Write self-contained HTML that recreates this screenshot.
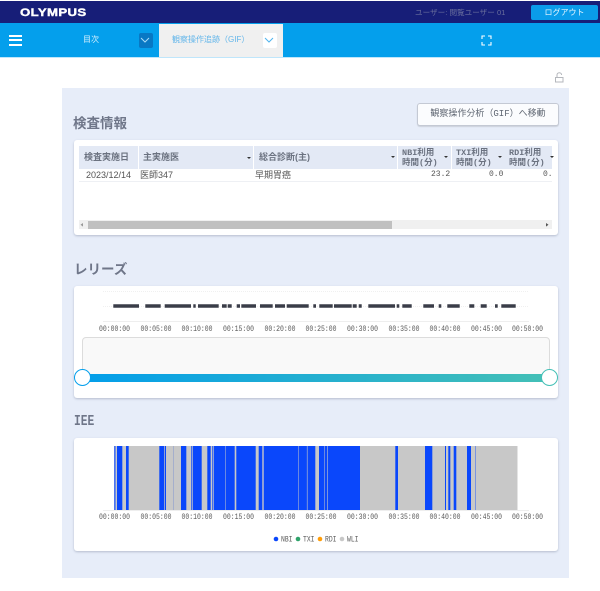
<!DOCTYPE html>
<html lang="ja"><head><meta charset="utf-8"><title>OLYMPUS</title>
<style>
*{box-sizing:border-box}
html,body{margin:0;padding:0;width:600px;height:591px;overflow:hidden;background:#fff;font-family:"Liberation Sans","Noto Sans CJK JP",sans-serif}
#w{position:absolute;left:0;top:0;width:600px;height:591px;filter:blur(.3px)}
.a{position:absolute;white-space:nowrap}
.card{position:absolute;background:#fff;border-radius:3px;box-shadow:0 1px 2px rgba(90,100,130,.35)}
.h{position:absolute;font-size:13.5px;font-weight:700;color:#6f7689;line-height:16px;white-space:nowrap}
.th{position:absolute;top:146px;height:23px;background:#e3e9f5;color:#6b7280;font-size:9px;font-weight:700;line-height:10px;white-space:nowrap}
.tri{position:absolute;width:0;height:0;border-left:2px solid transparent;border-right:2px solid transparent;border-top:2px solid #333}
.td{position:absolute;top:170px;font-size:9px;color:#555;line-height:10px;white-space:nowrap}
.mono{font-family:"Liberation Mono","Noto Sans CJK JP",monospace}
svg{position:absolute;left:0;top:0}
</style></head><body><div id="w">
<div class="a" style="left:0;top:1px;width:600px;height:22px;background:#171e78"></div>
<div class="a" style="left:20px;top:7px;font-size:11px;font-weight:700;color:#fff;letter-spacing:.3px;line-height:12px;transform:scaleX(1.2);transform-origin:left;-webkit-text-stroke:.4px #fff">OLYMPUS</div>
<div class="a" style="left:415px;top:7px;font-size:7.6px;color:#6a6f9c;line-height:11px">ユーザー: 閲覧ユーザー 01</div>
<div class="a" style="left:531px;top:5px;width:67px;height:15px;background:#0a9cea;border-radius:2px;color:#e8f6ff;font-size:8px;line-height:15px;text-align:center">ログアウト</div>
<div class="a" style="left:0;top:23px;width:600px;height:34px;background:#049fec"></div>
<div class="a" style="left:0;top:57px;width:600px;height:1px;background:#bfe6fb"></div>
<div class="a" style="left:9px;top:35px;width:13px;height:2px;background:#fff"></div>
<div class="a" style="left:9px;top:39px;width:13px;height:2px;background:#fff"></div>
<div class="a" style="left:9px;top:44px;width:13px;height:2px;background:#fff"></div>
<div class="a" style="left:83px;top:34px;font-size:8px;color:#d8f0fd;line-height:12px">目次</div>
<div class="a" style="left:139px;top:33px;width:14px;height:15px;background:#0878c4;border-radius:2px"></div>
<div class="a" style="left:159px;top:24px;width:124px;height:33px;background:#f0f0f0"></div>
<div class="a" style="left:172px;top:34px;font-size:8px;color:#63b6ea;line-height:12px">観察操作追跡（GIF）</div>
<div class="a" style="left:263px;top:33px;width:14px;height:15px;background:#fff;border-radius:2px"></div>

<div class="a" style="left:62px;top:88px;width:507px;height:490px;background:#e7edf9"></div>
<div class="h" style="left:73px;top:116px">検査情報</div>
<div class="h" style="left:74px;top:262px">レリーズ</div>
<div class="a mono" style="left:74px;top:414px;font-size:15px;font-weight:700;color:#6f7689;line-height:16px;transform:scaleX(.75);transform-origin:left">IEE</div>

<div class="a mono" style="left:417px;top:103px;width:142px;height:23px;background:#fbfcfe;border:1px solid #c4c9d4;border-radius:3px;box-shadow:0 1px 1px rgba(0,0,0,.12);font-size:9px;line-height:21px;text-align:center;color:#5f6672">観察操作分析（GIF）へ移動</div>

<div class="card" style="left:74px;top:140px;width:484px;height:95px"></div>
<div class="th" style="left:79px;width:59px;padding:6px 0 0 5px">検査実施日</div>
<div class="th" style="left:139px;width:114px;padding:6px 0 0 4px">主実施医</div>
<div class="th" style="left:254px;width:143px;padding:6px 0 0 5px">総合診断(主)</div>
<div class="th mono" style="left:398px;width:53px;padding:2px 0 0 4px;font-size:8.5px">NBI利用<br>時間(分)</div>
<div class="th mono" style="left:452px;width:53px;padding:2px 0 0 4px;font-size:8.5px">TXI利用<br>時間(分)</div>
<div class="th mono" style="left:505px;width:47px;padding:2px 0 0 4px;font-size:8.5px;overflow:hidden">RDI利用<br>時間(分)</div>
<div class="tri" style="left:247px;top:157px"></div>
<div class="tri" style="left:391px;top:156px"></div>
<div class="tri" style="left:444px;top:156px"></div>
<div class="tri" style="left:498px;top:156px"></div>
<div class="tri" style="left:550px;top:156px"></div>
<div class="a" style="left:79px;top:181px;width:473px;height:1px;background:#eef0f4"></div>
<div class="td" style="left:86px">2023/12/14</div>
<div class="td" style="left:140px">医師347</div>
<div class="td" style="left:255px">早期胃癌</div>
<div class="td mono" style="left:431px;font-size:8px">23.2</div>
<div class="td mono" style="left:489px;font-size:8px">0.0</div>
<div class="td mono" style="left:543px;width:9px;overflow:hidden;font-size:8px">0.0</div>
<div class="a" style="left:79px;top:220px;width:473px;height:9px;background:#f0f0f0"></div>
<div class="a" style="left:88px;top:221px;width:304px;height:8px;background:#c0c0c0"></div>

<div class="card" style="left:74px;top:286px;width:484px;height:112px"></div>
<div class="a" style="left:82px;top:337px;width:468px;height:44px;background:#f9f9f9;border:1px solid #dcdcdc;border-radius:4px"></div>
<div class="a" style="left:82px;top:374px;width:468px;height:8px;background:linear-gradient(90deg,#039eea,#44c0b6)"></div>
<div class="a" style="left:74px;top:369px;width:17px;height:17px;border-radius:50%;background:#fff;border:1.5px solid #049fec"></div>
<div class="a" style="left:541px;top:369px;width:17px;height:17px;border-radius:50%;background:#fff;border:1.5px solid #44c0b6"></div>

<div class="card" style="left:74px;top:438px;width:484px;height:113px"></div>

<svg width="600" height="591" viewBox="0 0 600 591">
<path d="M141 38l4 4 4-4" fill="none" stroke="#a9dcf7" stroke-width="1"/>
<path d="M265 38l4 4 4-4" fill="none" stroke="#4fb4ee" stroke-width="1"/>
<path d="M482 39v-3h3M488 36h3v3M491 42v3h-3M485 45h-3v-3" fill="none" stroke="#fff" stroke-width="1.1"/>
<rect x="555.5" y="77.500" width="7.500" height="4.500" fill="none" stroke="#b4b7bc"/>
<path d="M557 77v-2a2.300 2.300 0 0 1 4.600 0" fill="none" stroke="#b4b7bc"/>
<path d="M83 223l-2.500 1.800 2.500 1.800z" fill="#999"/>
<path d="M546 223l2.500 1.800-2.500 1.800z" fill="#555"/>

<g stroke="#f0f0f0" stroke-width="1" stroke-dasharray="1 1">
<path d="M103 291.500H529M103 306.500H529"/>
</g>
<path d="M103 321.500H529" stroke="#eeeeee"/>
<g stroke="#3a3d48" stroke-width="3.400" fill="none">
<path d="M113.300 306H139M145.300 306H160.700M164.700 306H191M193.300 306H195.700M198 306H218.700M222 306H226.700M227.700 306H231.700M236.700 306H240M241.300 306H256M260 306H272.700M275 306H285M286.700 306H308.700M313.300 306H316M319.300 306H332.700M334 306H351.700M352.700 306H356.700M358.700 306H361.700M368.300 306H395M396.700 306H399.300M402.300 306H411.700M423.300 306H434M438.700 306H441.300M447.300 306H459.700M469.300 306H474.300M480.700 306H486.700M495 306H497.700M501.300 306H515.700"/>
</g>
<g font-family="Liberation Mono,monospace" font-size="8" fill="#5a5a5a" text-anchor="middle">
<text x="114.500" y="331" textLength="31" lengthAdjust="spacingAndGlyphs">00:00:00</text>
<text x="156" y="331" textLength="31" lengthAdjust="spacingAndGlyphs">00:05:00</text>
<text x="197" y="331" textLength="31" lengthAdjust="spacingAndGlyphs">00:10:00</text>
<text x="238.500" y="331" textLength="31" lengthAdjust="spacingAndGlyphs">00:15:00</text>
<text x="280" y="331" textLength="31" lengthAdjust="spacingAndGlyphs">00:20:00</text>
<text x="321" y="331" textLength="31" lengthAdjust="spacingAndGlyphs">00:25:00</text>
<text x="362.500" y="331" textLength="31" lengthAdjust="spacingAndGlyphs">00:30:00</text>
<text x="404" y="331" textLength="31" lengthAdjust="spacingAndGlyphs">00:35:00</text>
<text x="445" y="331" textLength="31" lengthAdjust="spacingAndGlyphs">00:40:00</text>
<text x="486.500" y="331" textLength="31" lengthAdjust="spacingAndGlyphs">00:45:00</text>
<text x="527.500" y="331" textLength="31" lengthAdjust="spacingAndGlyphs">00:50:00</text>
</g>

<rect x="114" y="446" width="403.500" height="64" fill="#c8c8c8"/>
<g fill="#0a47fb">
<rect x="114" y="446" width="1.700" height="64" fill="#4a74f0"/>
<rect x="117" y="446" width="5.300" height="64"/>
<rect x="126" y="446" width="2.700" height="64"/>
<rect x="159.300" y="446" width="5" height="64"/>
<rect x="165" y="446" width="1" height="64"/>
<rect x="173.200" y="446" width=".6" height="64" fill="#8f9fcf"/>
<rect x="181" y="446" width="5.300" height="64"/>
<rect x="191.300" y="446" width="1" height="64"/>
<rect x="193" y="446" width="8.700" height="64"/>
<rect x="207.300" y="446" width="3.400" height="64"/>
<rect x="212" y="446" width=".7" height="64"/>
<rect x="213.700" y="446" width="11.800" height="64"/>
<rect x="226" y="446" width="8.700" height="64"/>
<rect x="236.300" y="446" width="19.400" height="64"/>
<rect x="258.700" y="446" width="3.600" height="64"/>
<rect x="263.700" y="446" width="34.800" height="64"/>
<rect x="299" y="446" width="7.900" height="64"/>
<rect x="307.500" y="446" width="7.800" height="64"/>
<rect x="319" y="446" width="5.500" height="64"/>
<rect x="325" y="446" width="2.200" height="64"/>
<rect x="327.800" y="446" width="32.200" height="64"/>
<rect x="395.300" y="446" width="2.700" height="64"/>
<rect x="425" y="446" width="7.300" height="64"/>
<rect x="445" y="446" width="1" height="64"/>
<rect x="448.300" y="446" width="2" height="64"/>
<rect x="453.700" y="446" width="2.600" height="64"/>
<rect x="467" y="446" width="4" height="64"/>
<rect x="475" y="446" width=".7" height="64" fill="#5a7de8"/>
</g>
<path d="M103 510.500H529" stroke="#eeeeee"/>
<g font-family="Liberation Mono,monospace" font-size="8" fill="#5a5a5a" text-anchor="middle">
<text x="114.500" y="519" textLength="31" lengthAdjust="spacingAndGlyphs">00:00:00</text>
<text x="156" y="519" textLength="31" lengthAdjust="spacingAndGlyphs">00:05:00</text>
<text x="197" y="519" textLength="31" lengthAdjust="spacingAndGlyphs">00:10:00</text>
<text x="238.500" y="519" textLength="31" lengthAdjust="spacingAndGlyphs">00:15:00</text>
<text x="280" y="519" textLength="31" lengthAdjust="spacingAndGlyphs">00:20:00</text>
<text x="321" y="519" textLength="31" lengthAdjust="spacingAndGlyphs">00:25:00</text>
<text x="362.500" y="519" textLength="31" lengthAdjust="spacingAndGlyphs">00:30:00</text>
<text x="404" y="519" textLength="31" lengthAdjust="spacingAndGlyphs">00:35:00</text>
<text x="445" y="519" textLength="31" lengthAdjust="spacingAndGlyphs">00:40:00</text>
<text x="486.500" y="519" textLength="31" lengthAdjust="spacingAndGlyphs">00:45:00</text>
<text x="527.500" y="519" textLength="31" lengthAdjust="spacingAndGlyphs">00:50:00</text>
</g>
<circle cx="276" cy="539" r="2.300" fill="#0a47fb"/>
<circle cx="298" cy="539" r="2.300" fill="#2fa36b"/>
<circle cx="320" cy="539" r="2.300" fill="#ff9d0a"/>
<circle cx="342" cy="539" r="2.300" fill="#c8c8c8"/>
<g font-family="Liberation Mono,monospace" font-size="8" fill="#5a5a5a">
<text x="281" y="541.500" textLength="11.500" lengthAdjust="spacingAndGlyphs">NBI</text>
<text x="303" y="541.500" textLength="11.500" lengthAdjust="spacingAndGlyphs">TXI</text>
<text x="325" y="541.500" textLength="11.500" lengthAdjust="spacingAndGlyphs">RDI</text>
<text x="347" y="541.500" textLength="11.500" lengthAdjust="spacingAndGlyphs">WLI</text>
</g>
</svg>
</div></body></html>
